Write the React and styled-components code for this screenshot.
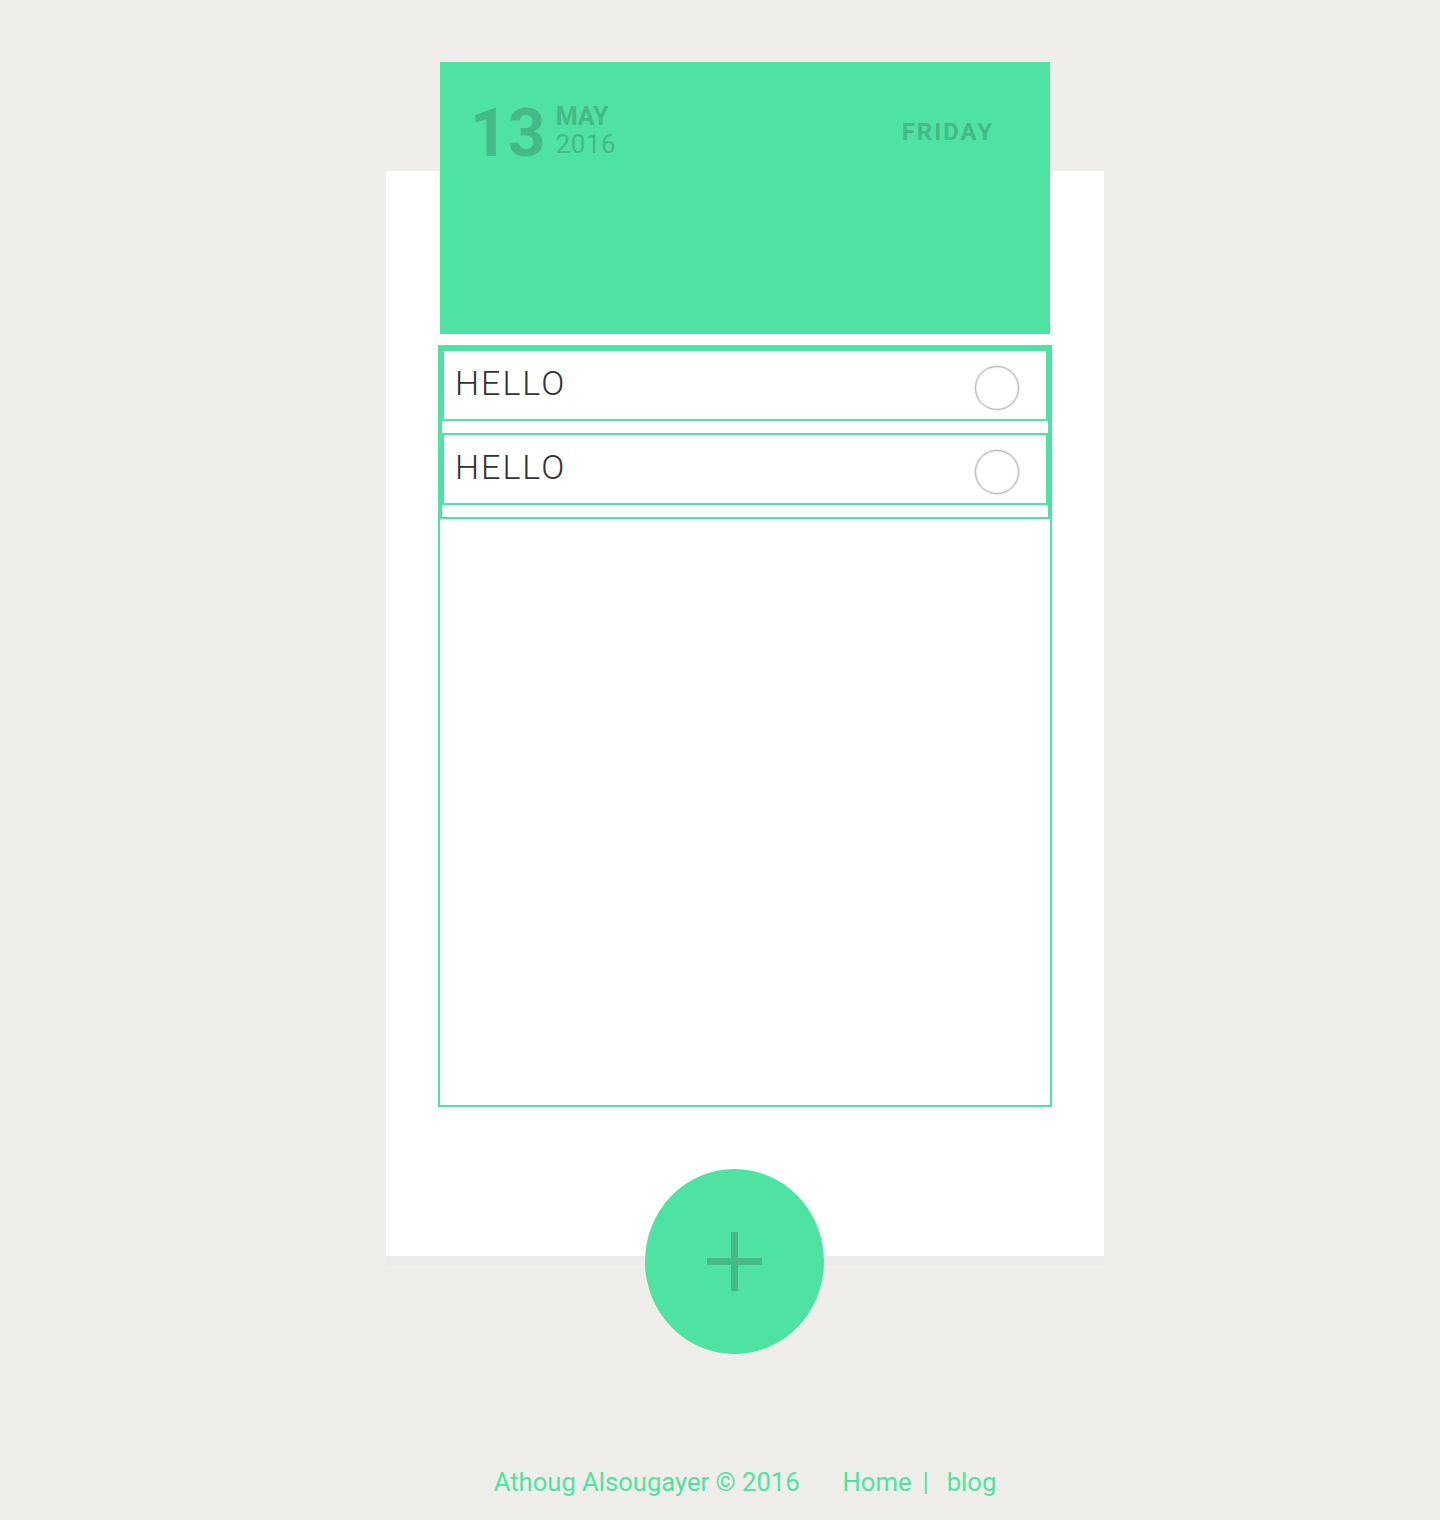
import React from "react";
import styled, { createGlobalStyle } from "styled-components";

const GREEN = "#4fe3a3";
const DARK = "#45b987";

const GlobalStyle = createGlobalStyle`
	html, body {
		margin: 0;
		padding: 0;
		background: #efeeea;
	}
	body {
		font-family: Roboto, "Liberation Sans", sans-serif;
	}
`;

// layout
const Page = styled.main`
	min-height: 1520px;
	box-sizing: border-box;
	padding-left: 50px;
	display: flex;
	flex-direction: column;
	align-items: center;
`;

const Card = styled.section`
	width: 718px;
	margin-top: 171px;
	box-sizing: border-box;
	padding: 0 54px 149px;
	background: #fff;
	box-shadow: 0 9px 0 #ebebeb;
`;

// header
const Header = styled.header`
	height: 272px;
	margin-top: -109px;
	box-sizing: border-box;
	padding: 39px 56px 0 30px;
	background: ${GREEN};
	color: ${DARK};
	display: flex;
	justify-content: space-between;
	align-items: flex-start;
`;

const DateBox = styled.div`
	display: flex;
	align-items: flex-start;
`;

const Day = styled.span`
	font-size: 66px;
	font-weight: 700;
	line-height: 1;
`;

const MonthYear = styled.div`
	display: flex;
	flex-direction: column;
	gap: 2px;
	margin: 3px 0 0 10px;
`;

const Month = styled.span`
	font-size: 25px;
	font-weight: 700;
	line-height: 1;
`;

const Year = styled.span`
	font-size: 26px;
	font-weight: 400;
	line-height: 1;
	letter-spacing: 0.5px;
`;

const Weekday = styled.span`
	margin-top: 19px;
	font-size: 24px;
	font-weight: 700;
	line-height: 1;
	letter-spacing: 2px;
`;

// task list
const List = styled.ul`
	list-style: none;
	margin: 11px -2px 0;
	padding: 0;
	height: 762px;
	box-sizing: border-box;
	border: 2px solid ${GREEN};
`;

const Group = styled.li`
	border: 2px solid ${GREEN};
`;

const Task = styled.div`
	height: 72px;
	box-sizing: border-box;
	margin-bottom: 12px;
	border: 2px solid ${GREEN};
	display: flex;
	justify-content: space-between;
	align-items: flex-start;
`;

const TaskText = styled.span`
	margin: 15px 0 0 11px;
	font-size: 34px;
	font-weight: 300;
	line-height: 1;
	letter-spacing: 2px;
	color: #333;
`;

const Check = styled.span`
	width: 44px;
	height: 44px;
	margin: 15px 27px 0 0;
	box-sizing: border-box;
	border-radius: 50%;
	border: 1.5px solid #b8b8b8;
	box-shadow: 0 0 2px rgba(0, 0, 0, 0.25), inset 0 0 2px rgba(0, 0, 0, 0.18);
	background: #fff;
`;

// add button
const AddButton = styled.button`
	width: 179px;
	height: 185px;
	margin: -87px 21px 0 0;
	padding: 0;
	border: none;
	border-radius: 50%;
	background: ${GREEN};
	display: flex;
	align-items: center;
	justify-content: center;
	cursor: pointer;
`;

// footer
const Footer = styled.footer`
	margin-top: 116px;
	display: flex;
	align-items: baseline;
	font-size: 25.6px;
	line-height: 1;
	color: ${GREEN};
`;

const FooterLink = styled.a`
	color: ${GREEN};
	text-decoration: none;
	margin-left: ${(p) => p.$gap || 0}px;
`;

const Separator = styled.span`
	margin: 0 18px 0 11px;
`;

function PlusIcon() {
	return (
		<svg width="55" height="59" viewBox="0 0 55 59" style={{ marginTop: -1 }}>
			<rect x="24" y="0" width="7" height="59" fill={DARK} />
			<rect x="0" y="26" width="55" height="7" fill={DARK} />
		</svg>
	);
}

const tasks = ["HELLO", "HELLO"];

export default function App() {
	return (
		<>
			<GlobalStyle />
			<Page>
				<Card>
					<Header>
						<DateBox>
							<Day>13</Day>
							<MonthYear>
								<Month>MAY</Month>
								<Year>2016</Year>
							</MonthYear>
						</DateBox>
						<Weekday>FRIDAY</Weekday>
					</Header>

					<List>
						<Group>
							{tasks.map((t, i) => (
								<Task key={i}>
									<TaskText>{t}</TaskText>
									<Check />
								</Task>
							))}
						</Group>
					</List>
				</Card>

				<AddButton aria-label='Add task'>
					<PlusIcon />
				</AddButton>

				<Footer>
					<span>Athoug Alsougayer © 2016</span>
					<FooterLink href='#' $gap={43}>
						Home
					</FooterLink>
					<Separator>|</Separator>
					<FooterLink href='#'>blog</FooterLink>
				</Footer>
			</Page>
		</>
	);
}
